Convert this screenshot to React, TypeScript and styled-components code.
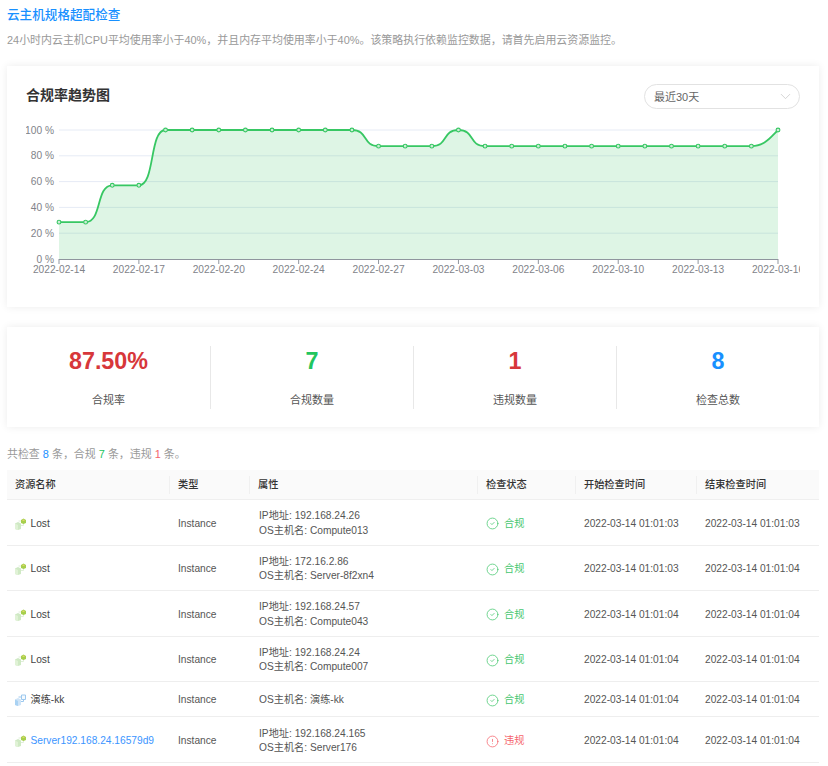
import React from "react";
import styled, { createGlobalStyle } from "styled-components";
import { ChevronDown, CircleCheck, CircleAlert } from "lucide-react";

const Global = createGlobalStyle`
  html, body { margin: 0; padding: 0; background: #fff; overflow: hidden; }
  body { font-family: "Liberation Sans", "Noto Sans CJK SC", sans-serif; color: #333; }
`;

const Page = styled.div`
  width: 812px;
  margin-left: 7px;
  padding-top: 7px;
  display: flex;
  flex-direction: column;
`;
const PageTitle = styled.h1`
  margin: 0;
  font-size: 12.6px;
  line-height: 16px;
  font-weight: 500;
  color: #1890ff;
`;
const Description = styled.p`
  margin: 9px 0 0;
  font-size: 10.95px;
  line-height: 16px;
  color: #999;
`;
const Card = styled.section`
  background: #fff;
  box-shadow: 0 0 8px rgba(0, 0, 0, 0.08);
`;
const ChartCard = styled(Card)`
  margin-top: 18px;
  height: 241px;
  padding: 18px 19px 0;
  box-sizing: border-box;
`;
const ChartHeader = styled.div`
  display: flex;
  justify-content: space-between;
  align-items: flex-start;
  height: 25px;
`;
const ChartTitle = styled.h2`
  margin: 0;
  font-size: 14px;
  line-height: 23px;
  font-weight: 700;
  color: #333;
`;
const Select = styled.div`
  width: 156px;
  height: 25px;
  box-sizing: border-box;
  border: 1px solid #e2e2e2;
  border-radius: 13px;
  padding: 0 5px 1px 9px;
  display: flex;
  align-items: center;
  justify-content: space-between;
  font-size: 11px;
  color: #666;
`;
const ChartSvg = styled.svg`
  display: block;
  margin-top: 12px;
`;
const StatsCard = styled(Card)`
  margin-top: 20px;
  height: 100px;
  display: grid;
  grid-template-columns: repeat(4, 1fr);
  align-items: center;
`;
const Stat = styled.div<{ $divider: boolean }>`
  height: 63px;
  display: flex;
  flex-direction: column;
  align-items: center;
  border-left: ${(p) => (p.$divider ? "1px solid #e8e8e8" : "none")};
`;
const StatValue = styled.div<{ $color: string }>`
  font-size: 23.3px;
  line-height: 30px;
  font-weight: 700;
  color: ${(p) => p.$color};
`;
const StatLabel = styled.div`
  margin-top: 16px;
  font-size: 11px;
  line-height: 16px;
  color: #555;
`;
const Summary = styled.p`
  margin: 19px 0 0;
  font-size: 10.95px;
  line-height: 16px;
  color: #999;
`;
const Count = styled.span<{ $color: string }>`
  color: ${(p) => p.$color};
`;
const COLUMNS = "163px 80px 228px 98px 121px 122px";
const HeaderRow = styled.div`
  margin-top: 8px;
  display: grid;
  grid-template-columns: ${COLUMNS};
  height: 30px;
  box-sizing: border-box;
  background: #fafafa;
  border-bottom: 1px solid #efefef;
  align-items: center;
`;
const HeaderCell = styled.div<{ $sep: boolean }>`
  height: 18px;
  line-height: 18px;
  padding-left: 8px;
  font-size: 10.2px;
  font-weight: 500;
  color: #333;
  border-left: ${(p) => (p.$sep ? "1px solid #f0f0f0" : "none")};
  margin-left: ${(p) => (p.$sep ? "-1px" : "0")};
`;
const Row = styled.div<{ $height: number; $pad: number }>`
  display: grid;
  grid-template-columns: ${COLUMNS};
  height: ${(p) => p.$height}px;
  padding-top: ${(p) => p.$pad}px;
  box-sizing: border-box;
  border-bottom: 1px solid #eee;
  align-items: center;
`;
const Cell = styled.div`
  padding-left: 8px;
  font-size: 10.2px;
  line-height: 14.5px;
  color: #555;
  white-space: nowrap;
`;
const AttrCell = styled(Cell)`
  padding-left: 9px;
`;
const NameCell = styled(Cell)<{ $link: boolean }>`
  display: flex;
  align-items: center;
  gap: 4.5px;
  color: ${(p) => (p.$link ? "#3b95ff" : "#444")};
`;
const StatusCell = styled(Cell)<{ $ok: boolean }>`
  display: flex;
  align-items: center;
  gap: 5px;
  color: ${(p) => (p.$ok ? "#46c76f" : "#f5656c")};
`;
const Line = styled.div``;

const X0 = 33;
const Y0 = 9;
const STEP = 719 / 27;
const H = 129;
const values = [
  28.57, 28.57, 57.14, 57.14, 100, 100, 100, 100, 100, 100, 100, 100, 87.5, 87.5, 87.5, 100,
  87.5, 87.5, 87.5, 87.5, 87.5, 87.5, 87.5, 87.5, 87.5, 87.5, 87.5, 100,
];
const px = (i: number) => X0 + i * STEP;
const py = (v: number) => Y0 + H - (v / 100) * H;

function buildLine() {
  let d = `M${px(0)} ${py(values[0])}`;
  for (let i = 1; i < values.length; i++) {
    const x0 = px(i - 1);
    const x1 = px(i);
    const y0 = py(values[i - 1]);
    const y1 = py(values[i]);
    if (i === values.length - 1) {
      d += ` C${x0 + 13} ${y0} ${x1 - 8} ${y1 + 8} ${x1} ${y1}`;
    } else {
      const k = y0 === y1 ? 0.3 : 0.62;
      d += ` C${x0 + STEP * k} ${y0} ${x1 - STEP * k} ${y1} ${x1} ${y1}`;
    }
  }
  return d;
}
const linePath = buildLine();
const areaPath = `${linePath} L${px(27)} ${Y0 + H} L${px(0)} ${Y0 + H} Z`;
const xLabels = [
  "2022-02-14", "2022-02-17", "2022-02-20", "2022-02-24", "2022-02-27",
  "2022-03-03", "2022-03-06", "2022-03-10", "2022-03-13", "2022-03-16",
];

function TrendChart() {
  return (
    <ChartSvg width={774} height={160} viewBox="0 0 774 160">
      {[100, 80, 60, 40, 20].map((v) => (
        <line key={v} x1={X0} x2={px(27)} y1={py(v)} y2={py(v)} stroke="#e6ebf5" strokeWidth={1} />
      ))}
      <path d={areaPath} fill="#2fc25b" fillOpacity={0.16} />
      <line x1={X0} x2={px(27)} y1={Y0 + H + 0.5} y2={Y0 + H + 0.5} stroke="#8f959e" strokeWidth={1} />
      {[100, 80, 60, 40, 20, 0].map((v) => (
        <text key={v} x={X0 - 5} y={py(v) + 3.5} textAnchor="end" fontSize={10.2} fill="#7f8389">
          {v} %
        </text>
      ))}
      {xLabels.map((l, i) => {
        const x = px(i * 3);
        return (
          <g key={l}>
            <line x1={x} x2={x} y1={Y0 + H} y2={Y0 + H + 5} stroke="#8f959e" strokeWidth={1} />
            <text x={x} y={Y0 + H + 13.5} textAnchor="middle" fontSize={10.2} fill="#7f8389">
              {l}
            </text>
          </g>
        );
      })}
      <path d={linePath} fill="none" stroke="#37c763" strokeWidth={1.8} />
      {values.map((v, i) => (
        <circle key={i} cx={px(i)} cy={py(v)} r={1.9} fill="#cdeed7" stroke="#37c763" strokeWidth={1.1} />
      ))}
    </ChartSvg>
  );
}

function ServerIcon({ tone }: { tone: "green" | "blue" }) {
  const green = tone === "green";
  return (
    <svg width={11} height={12} viewBox="0 0 11 12" style={{ flex: "none" }}>
      <path d="M0 5.5 L3 4 L6 5.5 V11 L3 12 L0 11 Z" fill={green ? "#cfe9c4" : "#cfe4f7"} />
      <path d="M0 5.5 L3 7 V12 L0 11 Z" fill={green ? "#e0f2d6" : "#a9d2f3"} />
      <path d="M3.5 3 H6 M6 7.5 H8.5 V6" stroke={green ? "#dfeed8" : "#9cc8ee"} strokeWidth={1} fill="none" />
      {green ? (
        <>
          <path d="M6 2 L8.5 0.5 L11 2 V5 L8.5 6 L6 5 Z" fill="#a6cf4d" />
          <path d="M7 2.2 L8.5 1.4 L10 2.2 L8.5 3 Z" fill="#e8d96a" />
        </>
      ) : (
        <path d="M6.5 1 H10.5 V5.5 H6.5 Z" fill="#f4f9fd" stroke="#9cc8ee" strokeWidth={1} />
      )}
    </svg>
  );
}

type RowData = {
  name: string;
  tone: "green" | "blue";
  link?: boolean;
  attrs: string[];
  ok: boolean;
  start: string;
  end: string;
  height: number;
  pad: number;
};
const rows: RowData[] = [
  { name: "Lost", tone: "green", attrs: ["IP地址: 192.168.24.26", "OS主机名: Compute013"], ok: true, start: "2022-03-14 01:01:03", end: "2022-03-14 01:01:03", height: 45.5, pad: 3 },
  { name: "Lost", tone: "green", attrs: ["IP地址: 172.16.2.86", "OS主机名: Server-8f2xn4"], ok: true, start: "2022-03-14 01:01:03", end: "2022-03-14 01:01:04", height: 45.5, pad: 3 },
  { name: "Lost", tone: "green", attrs: ["IP地址: 192.168.24.57", "OS主机名: Compute043"], ok: true, start: "2022-03-14 01:01:04", end: "2022-03-14 01:01:04", height: 45.5, pad: 3 },
  { name: "Lost", tone: "green", attrs: ["IP地址: 192.168.24.24", "OS主机名: Compute007"], ok: true, start: "2022-03-14 01:01:04", end: "2022-03-14 01:01:04", height: 45.5, pad: 3 },
  { name: "演练-kk", tone: "blue", attrs: ["OS主机名: 演练-kk"], ok: true, start: "2022-03-14 01:01:04", end: "2022-03-14 01:01:04", height: 35, pad: 2 },
  { name: "Server192.168.24.16579d9", tone: "green", link: true, attrs: ["IP地址: 192.168.24.165", "OS主机名: Server176"], ok: false, start: "2022-03-14 01:01:04", end: "2022-03-14 01:01:04", height: 46, pad: 3 },
];
const heads = ["资源名称", "类型", "属性", "检查状态", "开始检查时间", "结束检查时间"];
const stats = [
  { value: "87.50%", label: "合规率", color: "#d7373a" },
  { value: "7", label: "合规数量", color: "#22c55e" },
  { value: "1", label: "违规数量", color: "#d7373a" },
  { value: "8", label: "检查总数", color: "#1890ff" },
];

export default function App() {
  return (
    <Page>
      <Global />
      <PageTitle>云主机规格超配检查</PageTitle>
      <Description>
        24小时内云主机CPU平均使用率小于40%，并且内存平均使用率小于40%。该策略执行依赖监控数据，请首先启用云资源监控。
      </Description>
      <ChartCard>
        <ChartHeader>
          <ChartTitle>合规率趋势图</ChartTitle>
          <Select>
            最近30天
            <ChevronDown size={17} color="#c4c4c4" strokeWidth={1} />
          </Select>
        </ChartHeader>
        <TrendChart />
      </ChartCard>
      <StatsCard>
        {stats.map((s, i) => (
          <Stat key={s.label} $divider={i > 0}>
            <StatValue $color={s.color}>{s.value}</StatValue>
            <StatLabel>{s.label}</StatLabel>
          </Stat>
        ))}
      </StatsCard>
      <Summary>
        共检查 <Count $color="#1890ff">8</Count> 条，合规 <Count $color="#22c55e">7</Count> 条，违规{" "}
        <Count $color="#f5656c">1</Count> 条。
      </Summary>
      <HeaderRow>
        {heads.map((h, i) => (
          <HeaderCell key={h} $sep={i > 0}>
            {h}
          </HeaderCell>
        ))}
      </HeaderRow>
      {rows.map((r, i) => (
        <Row key={i} $height={r.height} $pad={r.pad}>
          <NameCell $link={!!r.link}>
            <ServerIcon tone={r.tone} />
            {r.name}
          </NameCell>
          <Cell>Instance</Cell>
          <AttrCell>
            {r.attrs.map((a) => (
              <Line key={a}>{a}</Line>
            ))}
          </AttrCell>
          <StatusCell $ok={r.ok}>
            {r.ok ? <CircleCheck size={13} strokeWidth={1.4} /> : <CircleAlert size={13} strokeWidth={1.4} />}
            {r.ok ? "合规" : "违规"}
          </StatusCell>
          <Cell>{r.start}</Cell>
          <Cell>{r.end}</Cell>
        </Row>
      ))}
    </Page>
  );
}
